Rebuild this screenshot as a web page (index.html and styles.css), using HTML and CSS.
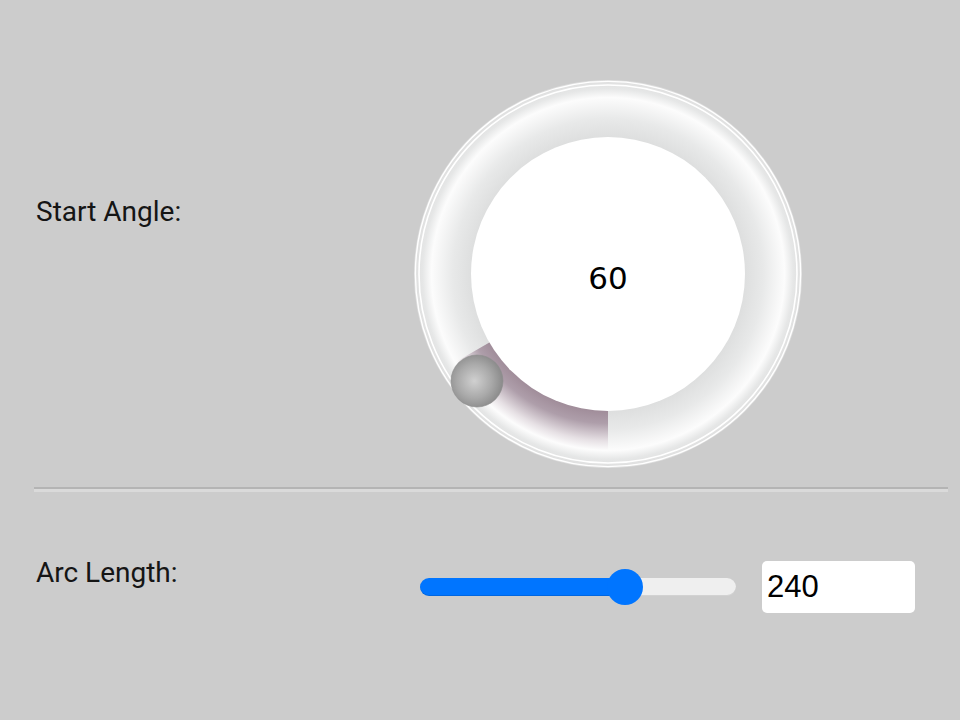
FILE: index.html
```html
<!DOCTYPE html>
<html lang="en">
<head>
    <meta charset="UTF-8">
    <meta name="viewport" content="width=device-width, initial-scale=1.0">
    <title>Arc Settings</title>
    <link rel="stylesheet" href="styles.css">
</head>
<body>
    <main class="panel">
        <section class="row row-angle">
            <label class="label">Start Angle:</label>
            <div class="dial">
                <svg viewBox="0 0 390 390" width="390" height="390">
                    <defs>
                        <radialGradient id="trackGrad" cx="195" cy="195" r="194" gradientUnits="userSpaceOnUse">
                            <stop offset="0.69" stop-color="#dcdddd"/>
                            <stop offset="0.80" stop-color="#e8e9e9"/>
                            <stop offset="0.91" stop-color="#fcfcfc"/>
                            <stop offset="0.955" stop-color="#e6e7e7"/>
                            <stop offset="1" stop-color="#dedede"/>
                        </radialGradient>
                        <radialGradient id="fillGrad" cx="195" cy="195" r="194" gradientUnits="userSpaceOnUse">
                            <stop offset="0.69" stop-color="#9d8996"/>
                            <stop offset="0.77" stop-color="#ae9eaa"/>
                            <stop offset="0.86" stop-color="#e6e0e4"/>
                            <stop offset="0.91" stop-color="#fdfdfd"/>
                        </radialGradient>
                        <radialGradient id="knobGrad" cx="0.45" cy="0.5" r="0.55">
                            <stop offset="0" stop-color="#d0d0d0"/>
                            <stop offset="0.6" stop-color="#a9a9a9"/>
                            <stop offset="1" stop-color="#8a8a8a"/>
                        </radialGradient>
                    </defs>
                    <!-- ring track -->
                    <circle cx="195" cy="195" r="194" fill="url(#trackGrad)"/>
                    <circle cx="195" cy="195" r="192.6" fill="none" stroke="#ffffff" stroke-width="1.4"/>
                    <circle cx="195" cy="195" r="189" fill="none" stroke="#ffffff" stroke-width="1.6"/>
                    <!-- filled arc -->
                    <path d="M195 371 A176 176 0 0 1 42.6 283 L78.1 262.5 A135 135 0 0 0 195 330 Z" fill="url(#fillGrad)"/>
                    <circle cx="195" cy="195" r="137" fill="#ffffff"/>
                    <text class="dial-value" x="195" y="210" text-anchor="middle">60</text>
                    <!-- handle -->
                    <circle cx="64" cy="302" r="26" fill="url(#knobGrad)" stroke="#8d8d8d" stroke-width="0.6"/>
                </svg>
            </div>
        </section>

        <hr class="divider">

        <section class="row row-arc">
            <label class="label">Arc Length:</label>
            <div class="controls">
                <input type="range" class="slider" min="0" max="360" value="240" style="--fill: 65%">
                <input type="text" class="value-input" value="240">
            </div>
        </section>
    </main>
</body>
</html>
```

FILE: styles.css
```css
* {
    box-sizing: border-box;
}

body {
    margin: 0;
    background-color: #cccccc;
    font-family: 'Roboto', 'Liberation Sans', sans-serif;
    color: #151515;
}

.panel {
    padding: 0 12px 0 34px;
}

.row {
    display: flex;
    align-items: flex-start;
}

.row-angle {
    padding-top: 79px;
}

.label {
    width: 379px;
    flex-shrink: 0;
    padding-left: 2px;
    font-size: 28px;
}

.row-angle .label {
    margin-top: 116px;
}

.dial svg {
    display: block;
}

.dial-value {
    font-family: 'DejaVu Sans', sans-serif;
    font-size: 31px;
    fill: #000000;
}

.divider {
    margin: 18px 0 0;
    height: 0;
    border: 0;
    border-top: 2px solid #b4b4b4;
    border-bottom: 3px solid #dadada;
}

.row-arc {
    margin-top: 64px;
}

.controls {
    display: flex;
    align-items: center;
    gap: 26px;
    height: 52px;
    margin-top: 5px;
    margin-left: 7px;
}

.slider {
    -webkit-appearance: none;
    appearance: none;
    width: 316px;
    height: 36px;
    margin: 0;
    background: transparent;
    outline: none;
}

.slider::-webkit-slider-runnable-track {
    height: 18px;
    border-radius: 9px;
    background: linear-gradient(to right, #0075ff var(--fill), #efefef var(--fill));
    box-shadow: inset 0 -1px 0 rgba(0, 0, 0, 0.12);
}

.slider::-webkit-slider-thumb {
    -webkit-appearance: none;
    width: 36px;
    height: 36px;
    margin-top: -9px;
    border-radius: 50%;
    background: #0075ff;
    border: none;
}

.value-input {
    width: 153px;
    height: 52px;
    padding: 0 5px;
    border: none;
    border-radius: 5px;
    background: #ffffff;
    color: #000000;
    font-family: 'Liberation Sans', Arial, sans-serif;
    font-size: 31px;
    outline: none;
}
```
